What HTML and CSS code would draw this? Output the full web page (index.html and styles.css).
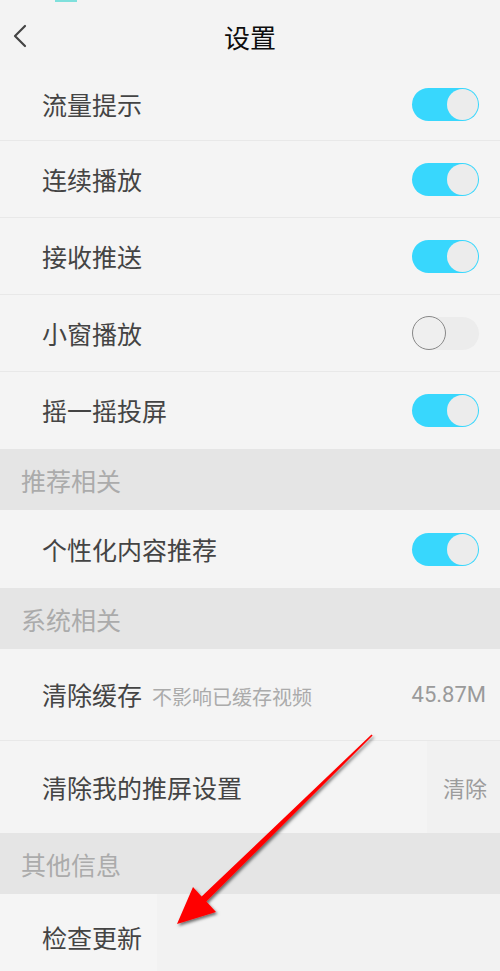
FILE: index.html
```html
<!DOCTYPE html>
<html lang="zh">
<head>
<meta charset="utf-8">
<title>设置</title>
<link rel="stylesheet" href="styles.css">
</head>
<body>
<div class="page">
  <div class="status-mark"></div>
  <header class="topbar">
    <span class="back">
      <svg width="16" height="24" viewBox="0 0 16 24"><path d="M13 2 L3 12 L13 22" fill="none" stroke="#444" stroke-width="2.2" stroke-linecap="round" stroke-linejoin="round"/></svg>
    </span>
    <h1 class="title">设置</h1>
    <span></span>
  </header>

  <div class="row row-first"><span class="label">流量提示</span><span class="switch on"><span class="knob"></span></span></div>
  <div class="row"><span class="label">连续播放</span><span class="switch on"><span class="knob"></span></span></div>
  <div class="row"><span class="label">接收推送</span><span class="switch on"><span class="knob"></span></span></div>
  <div class="row"><span class="label">小窗播放</span><span class="switch off"><span class="knob"></span></span></div>
  <div class="row row-last"><span class="label">摇一摇投屏</span><span class="switch on"><span class="knob"></span></span></div>

  <div class="section">推荐相关</div>
  <div class="row row-last row-tall"><span class="label">个性化内容推荐</span><span class="switch on"><span class="knob"></span></span></div>

  <div class="section">系统相关</div>
  <div class="row row-big row-value"><span class="label">清除缓存<span class="sub">不影响已缓存视频</span></span><span class="value">45.87M</span></div>
  <div class="row row-big row-last row-btn"><span class="label">清除我的推屏设置</span><span class="btn">清除</span></div>

  <div class="section">其他信息</div>
  <div class="row row-big row-update"><span class="label label-box">检查更新</span></div>

  <svg class="arrow" width="500" height="971" viewBox="0 0 500 971">
    <defs>
      <filter id="sh" x="-20%" y="-20%" width="140%" height="140%">
        <feDropShadow dx="1.5" dy="2" stdDeviation="1.5" flood-color="#000" flood-opacity="0.55"/>
      </filter>
    </defs>
    <polygon filter="url(#sh)" fill="#ff0000" points="177,924 193,887 201.6,896.6 371.5,734.5 372.6,735.6 206.4,901.4 216,912"/>
  </svg>
</div>
</body>
</html>
```
FILE: styles.css
```css
* { box-sizing: border-box; }
html, body { margin: 0; padding: 0; }
body {
  background: #f4f4f4;
  font-family: "Noto Sans CJK SC", "Noto Sans", sans-serif;
}
.page {
  position: relative;
  width: 500px;
  height: 971px;
  overflow: hidden;
  background: #f4f4f4;
}
.status-mark {
  position: absolute;
  left: 55px;
  top: 0;
  width: 22px;
  height: 2px;
  background: #7fe0dc;
}
.topbar {
  height: 70px;
  background: #f3f3f3;
  display: grid;
  grid-template-columns: 60px 1fr 60px;
  align-items: center;
  padding-top: 4px;
}
.back {
  display: flex;
  padding-left: 12px;
  padding-bottom: 2px;
}
.title {
  margin: 0;
  text-align: center;
  font-size: 26px;
  font-weight: 400;
  color: #0d0d0d;
  line-height: 1;
}
.row {
  display: flex;
  align-items: center;
  justify-content: space-between;
  height: 77px;
  padding: 0 21px 0 42px;
  border-bottom: 1px solid #e8e8e8;
  background: #f4f4f4;
}
.row-first { height: 71px; padding-bottom: 2px; }
.row-last { border-bottom: none; }
.row-tall { height: 78px; }
.row-big { height: 92px; }
.row-value { padding-right: 14px; }
.label {
  font-size: 25px;
  color: #444;
  line-height: 1;
  display: flex;
  align-items: baseline;
}
.sub {
  font-size: 20px;
  color: #ababab;
  margin-left: 10px;
}
.value {
  font-size: 22px;
  color: #9a9a9a;
  font-family: "Roboto", "Noto Sans", sans-serif;
}
.row-btn {
  padding-right: 0;
}
.btn {
  align-self: stretch;
  display: flex;
  align-items: center;
  justify-content: flex-end;
  width: 73px;
  padding-right: 13px;
  background: #f1f1f1;
  font-size: 22px;
  color: #9c9c9c;
}
.section {
  height: 61px;
  background: #e5e5e5;
  display: flex;
  align-items: center;
  padding-left: 21px;
  font-size: 25px;
  color: #ababab;
}
.row-update {
  background: #f2f2f2;
  padding-left: 0;
  align-items: stretch;
  height: 92px;
  border-bottom: none;
}
.label-box {
  width: 157px;
  background: #f5f5f5;
  padding-left: 42px;
  align-items: center;
  padding-bottom: 6px;
}
.switch {
  position: relative;
  width: 67px;
  height: 33px;
  border-radius: 17px;
  display: flex;
  align-items: center;
}
.switch.on {
  background: #38d7fd;
  justify-content: flex-end;
  padding-right: 1px;
}
.switch.on .knob {
  width: 31px;
  height: 31px;
  border-radius: 50%;
  background: #ececec;
}
.switch.off {
  background: #ececec;
  justify-content: flex-start;
}
.switch.off .knob {
  width: 34px;
  height: 34px;
  border-radius: 50%;
  background: #efefef;
  border: 1.5px solid #888;
}
.arrow {
  position: absolute;
  left: 0;
  top: 0;
  pointer-events: none;
}
```
